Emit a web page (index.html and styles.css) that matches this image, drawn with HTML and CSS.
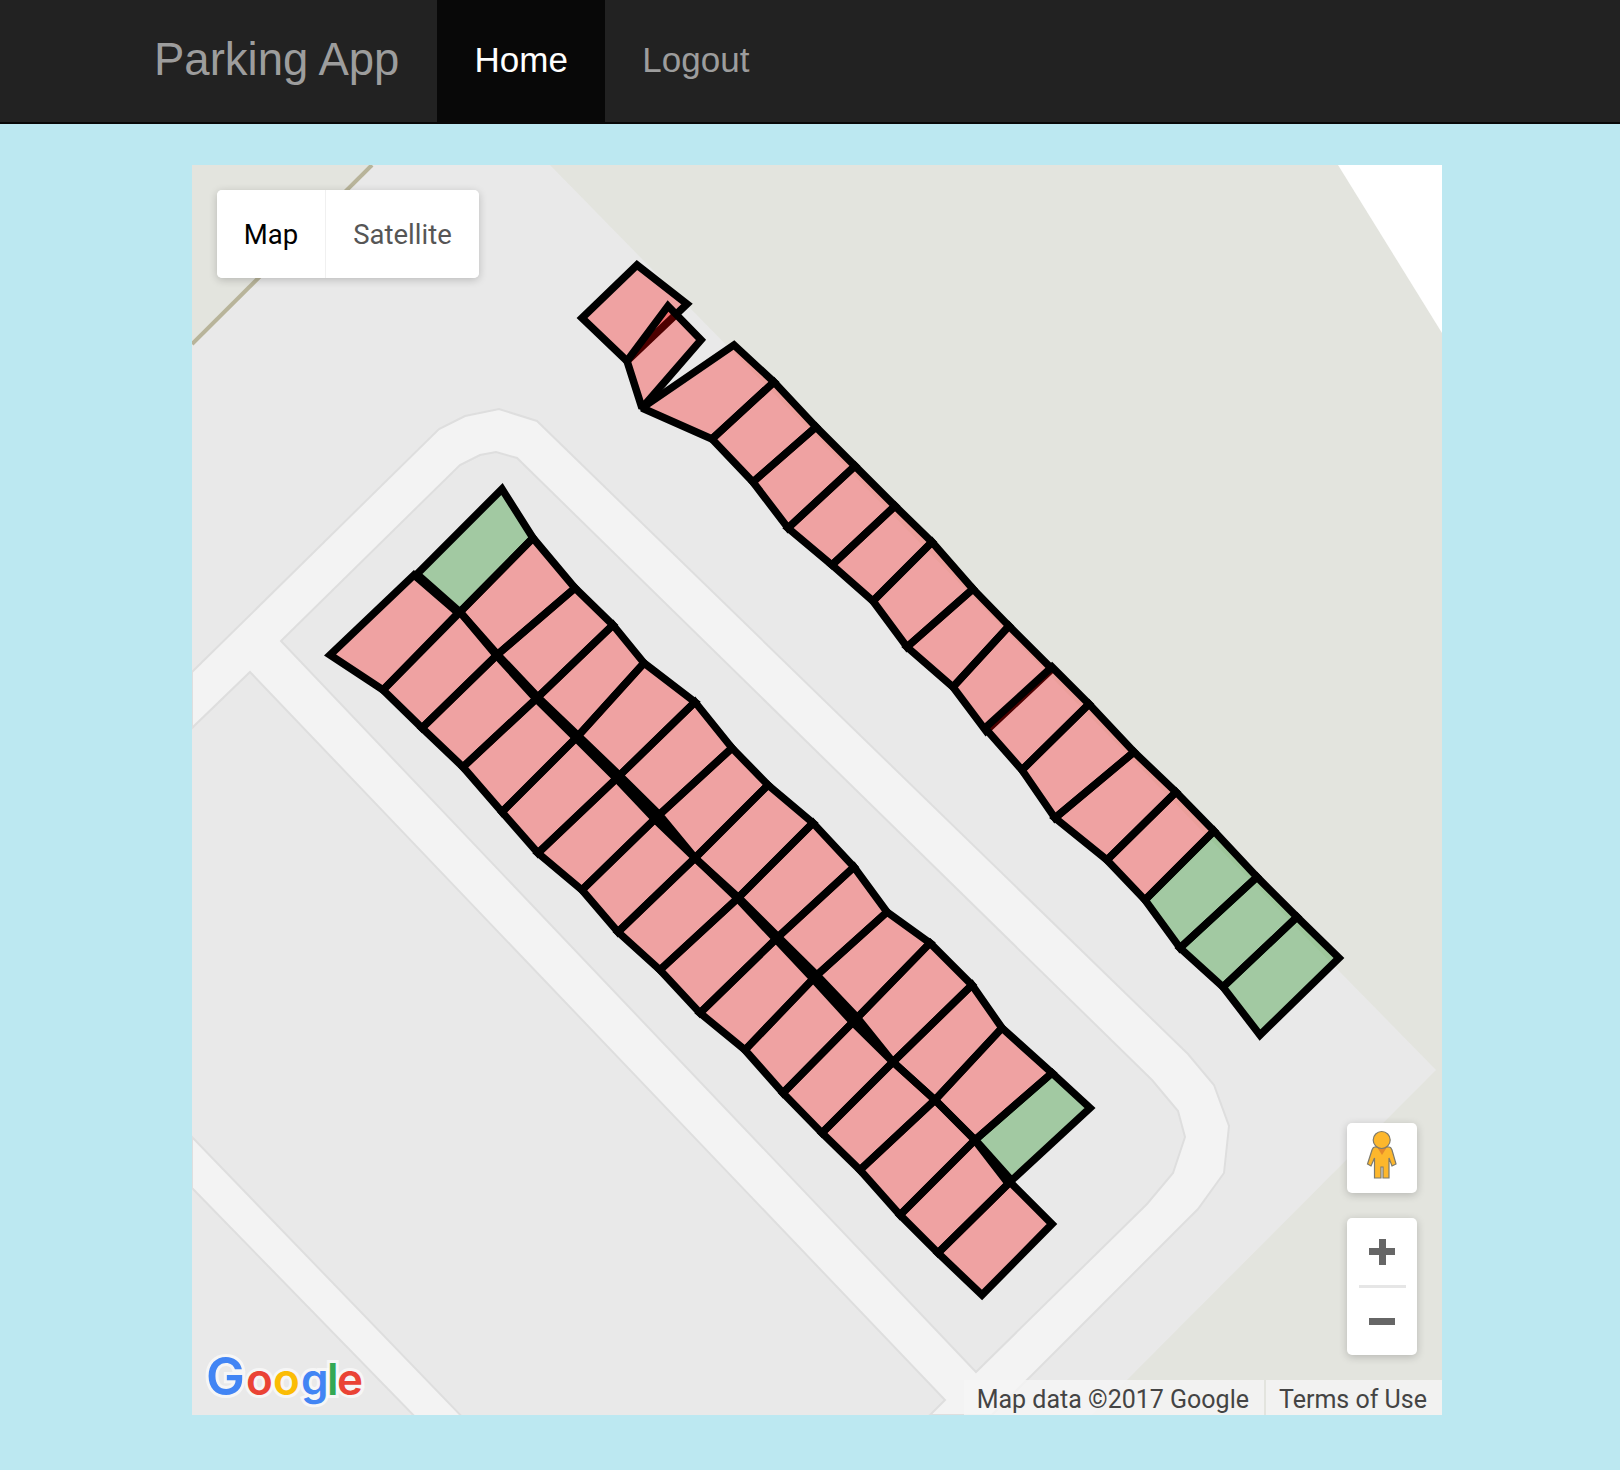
FILE: index.html
```html
<!DOCTYPE html>
<html>
    <head>
        <title>Parking App</title>
        <link rel="stylesheet" href="styles.css">
    </head>
    <body>
        <nav class="navbar">
            <a class="brand" href="#">Parking App</a>
            <ul class="nav_links">
                <li class="active"><a href="#">Home</a></li>
                <li><a href="#">Logout</a></li>
            </ul>
        </nav>
        <section class="map">
            <svg class="map_canvas" viewBox="192 165 1250 1250">
                <!-- ground -->
                <rect class="pavement" x="192" y="165" width="1250" height="1250" />
                <polygon class="land" points="550,165 1442,165 1442,1415 1092,1415 1436,1070" />
                <polygon class="land" points="192,165 372,165 192,344" />
                <line class="path" x1="372" y1="165" x2="192" y2="344" />
                <polygon class="blank" points="1338,165 1442,165 1442,333" />
                <!-- roads -->
                <polygon class="road" points="192,672 439,429 465,416 499,409 537,421 1188,1054 1214,1085 1229,1126 1224,1173 1198,1209 992,1415 930,1415 945,1400 250,672 192,728" />
                <polygon class="island" points="281,641 460,465 480,455 496,452 517,458 1152,1080 1178,1111 1185,1137 1173,1173 1147,1204 976,1372" />
                <polygon class="road" points="192,1137 470,1425 423,1425 192,1188" />

                <!-- right row -->
                <polygon class="taken" points="637,265 687,304 627,361 582,318" />
                <polygon class="taken" points="668,306 701,340 642,408 627,361" />
                <polygon class="taken" points="642,408 734,345 774,382 712,439" />
                <polygon class="taken" points="774,382 816,427 753,482 712,439" />
                <polygon class="taken" points="816,427 855,466 788,528 753,482" />
                <polygon class="taken" points="855,466 895,506 832,565 788,528" />
                <polygon class="taken" points="895,506 932,542 873,601 832,565" />
                <polygon class="taken" points="932,542 973,589 907,647 873,601" />
                <polygon class="taken" points="973,589 1009,626 953,687 907,647" />
                <polygon class="taken" points="1009,626 1052,669 986,731 953,687" />
                <polygon class="taken" points="1052,667 1089,704 1022,770 985,728" />
                <polygon class="taken" points="1089,704 1134,752 1055,818 1022,770" />
                <polygon class="taken" points="1134,752 1176,792 1107,860 1055,818" />
                <polygon class="taken" points="1176,792 1214,831 1145,900 1107,860" />
                <polygon class="free" points="1214,831 1257,877 1180,948 1145,900" />
                <polygon class="free" points="1257,877 1297,917 1223,987 1180,948" />
                <polygon class="free" points="1297,917 1339,958 1260,1035 1223,987" />

                <!-- left block, upper column -->
                <polygon class="free" points="502,489 533,538 460,612 417,574" />
                <polygon class="taken" points="533,538 575,588 497.5,654.5 460,612" />
                <polygon class="taken" points="575,588 613,625 537.9,697.1 497.5,654.5" />
                <polygon class="taken" points="613,625 644,663 578.2,735.8 537.9,697.1" />
                <polygon class="taken" points="644,663 695,702 619.6,775.4 578.2,735.8" />
                <polygon class="taken" points="695,702 732,748 659.3,814.7 619.6,775.4" />
                <polygon class="taken" points="732,748 768,785 695,858 659.3,814.7" />
                <polygon class="taken" points="768,785 813,823 738.5,897.5 695,858" />
                <polygon class="taken" points="813,823 854,867 778.2,936.8 738.5,897.5" />
                <polygon class="taken" points="854,867 887,912 816.9,975.1 778.2,936.8" />
                <polygon class="taken" points="887,912 930,943 857.3,1017.7 816.9,975.1" />
                <polygon class="taken" points="930,943 972,985 893,1062 857.3,1017.7" />
                <polygon class="taken" points="972,985 1002,1028 935,1100 893,1062" />
                <polygon class="taken" points="1002,1028 1052,1073 975.2,1139.8 935,1100" />
                <polygon class="free" points="1052,1073 1090,1108 1011.6,1180.4 975.2,1139.8" />

                <!-- left block, lower column -->
                <polygon class="taken" points="414,575 458,613 383,690 330,655" />
                <polygon class="taken" points="460,612 496.5,655.5 422,728 383,690" />
                <polygon class="taken" points="496.5,655.5 536.1,698.9 463,767 422,728" />
                <polygon class="taken" points="536.1,698.9 575.8,738.2 502,812 463,767" />
                <polygon class="taken" points="575.8,738.2 616.4,778.6 538,853 502,812" />
                <polygon class="taken" points="616.4,778.6 654.7,819.3 582,890 538,853" />
                <polygon class="taken" points="654.7,819.3 695,858 618,932 582,890" />
                <polygon class="taken" points="695,858 737.5,898.5 660,970 618,932" />
                <polygon class="taken" points="737.5,898.5 775.8,939.2 700,1013 660,970" />
                <polygon class="taken" points="775.8,939.2 813.1,978.9 745,1050 700,1013" />
                <polygon class="taken" points="813.1,978.9 852.7,1022.3 783,1093 745,1050" />
                <polygon class="taken" points="852.7,1022.3 893,1062 822,1133 783,1093" />
                <polygon class="taken" points="893,1062 935,1100 860,1170 822,1133" />
                <polygon class="taken" points="935,1100 974.8,1140.2 900,1215 860,1170" />
                <polygon class="taken" points="974.8,1140.2 1008.4,1183.6 938,1253 900,1215" />
                <polygon class="taken" points="1010,1182 1052,1224 982,1295 938,1253" />

                <!-- google logo -->
                <text class="logo">
                    <tspan class="logo_big logo_blue" x="206" y="1395">G</tspan>
                    <tspan class="logo_red" x="246" y="1395">o</tspan>
                    <tspan class="logo_yellow" x="273" y="1395">o</tspan>
                    <tspan class="logo_blue" x="301" y="1395">g</tspan>
                    <tspan class="logo_green" x="327" y="1395">l</tspan>
                    <tspan class="logo_red" x="337" y="1395">e</tspan>
                </text>
            </svg>

            <div class="map_type">
                <button class="map_type_btn selected">Map</button>
                <button class="map_type_btn">Satellite</button>
            </div>

            <div class="pegman">
                <svg viewBox="0 0 70 70" width="70" height="70">
                    <path class="pegman_body" d="M28,24 L42,24 Q44,24 45,27 L49,41 L45,43 L42,35 L42,55 L36,55 L36,44 L34,44 L34,55 L27.5,55 L27.5,35 L24,43 L20.5,41 L25,27 Q26,24 28,24 Z" />
                    <path class="pegman_collar" d="M30,24 L40,24 L35,32 Z" />
                    <circle class="pegman_body" cx="34.7" cy="17" r="8.5" />
                </svg>
            </div>

            <div class="zoom_ctrl">
                <button class="zoom_btn"><span class="plus"></span></button>
                <div class="zoom_line"></div>
                <button class="zoom_btn"><span class="minus"></span></button>
            </div>

            <div class="attribution">
                <span>Map data ©2017 Google</span>
                <span>Terms of Use</span>
            </div>
        </section>
    </body>
</html>
```

FILE: styles.css
```css
*{
    box-sizing: border-box;
}
html, body{
    margin: 0;
    padding: 0;
    background: #bce8f1;
}
a{
    text-decoration: none;
}

/* navbar */
.navbar{
    display: flex;
    height: 124px;
    padding-left: 118px;
    background: #222;
    border-bottom: 2px solid #080808;
    font-family: "Liberation Sans", sans-serif;
}
.brand{
    padding: 0 38px 0 36px;
    font-size: 45.5px;
    line-height: 120px;
    color: #9d9d9d;
}
.nav_links{
    display: flex;
    margin: 0;
    padding: 0;
    list-style: none;
}
.nav_links a{
    display: block;
    height: 122px;
    padding: 0 37.2px;
    font-size: 35px;
    line-height: 120px;
    color: #9d9d9d;
}
.nav_links .active a{
    background: #080808;
    color: #fff;
}

/* map */
.map{
    position: relative;
    width: 1250px;
    height: 1250px;
    margin: 41px 0 55px 192px;
    overflow: hidden;
}
.map_canvas{
    display: block;
    width: 1250px;
    height: 1250px;
}
.pavement{
    fill: #e9e9e9;
}
.land{
    fill: #e3e4de;
}
.blank{
    fill: #fff;
}
.path{
    stroke: #b8b49a;
    stroke-width: 4;
}
.road{
    fill: #f3f3f3;
    stroke: #dedede;
    stroke-width: 2;
}
.island{
    fill: #e9e9e9;
    stroke: #dedede;
    stroke-width: 2;
}
.taken, .free{
    stroke: #000;
    stroke-width: 7.5;
    stroke-linejoin: miter;
    stroke-miterlimit: 2;
    fill-opacity: 0.3;
}
.taken{
    fill: #f00;
}
.free{
    fill: #008000;
}

/* logo */
.logo{
    font-family: Inter, sans-serif;
    font-size: 44px;
    font-weight: 600;
    stroke: #fff;
    stroke-opacity: 0.6;
    stroke-width: 6px;
    paint-order: stroke;
}
.logo_big{
    font-size: 52px;
}
.logo_blue{
    fill: #4285f4;
}
.logo_red{
    fill: #ea4335;
}
.logo_yellow{
    fill: #fbbc05;
}
.logo_green{
    fill: #34a853;
}

/* map controls */
.map_type{
    position: absolute;
    top: 25px;
    left: 25px;
    display: flex;
    gap: 1px;
    height: 88px;
    border-radius: 5px;
    box-shadow: 0 2px 8px rgba(0,0,0,0.2);
    background: #f0f0f0;
    overflow: hidden;
}
.map_type_btn{
    padding: 0;
    border: 0;
    background: #fff;
    font-family: Roboto, sans-serif;
    font-size: 27.5px;
    color: #565656;
    width: 153px;
}
.map_type_btn.selected{
    width: 108px;
    color: #000;
}
.pegman{
    position: absolute;
    top: 958px;
    left: 1155px;
    width: 70px;
    height: 70px;
    border-radius: 5px;
    background: #fff;
    box-shadow: 0 2px 8px rgba(0,0,0,0.2);
}
.pegman svg{
    display: block;
}
.pegman_body{
    fill: #fdb72c;
    stroke: #7d7a6d;
    stroke-width: 1.2;
}
.pegman_collar{
    fill: #e5892b;
}
.zoom_ctrl{
    position: absolute;
    top: 1053px;
    left: 1155px;
    width: 70px;
    height: 137px;
    display: flex;
    flex-direction: column;
    align-items: center;
    border-radius: 5px;
    background: #fff;
    box-shadow: 0 2px 8px rgba(0,0,0,0.2);
}
.zoom_btn{
    flex: 1;
    width: 100%;
    padding: 0;
    border: 0;
    background: none;
    display: flex;
    align-items: center;
    justify-content: center;
}
.zoom_line{
    width: 47px;
    height: 3px;
    background: #e6e6e6;
}
.plus, .minus{
    position: relative;
    display: block;
    width: 26px;
    height: 7px;
    background: #666;
}
.plus::after{
    content: "";
    position: absolute;
    top: -9.5px;
    left: 9.5px;
    width: 7px;
    height: 26px;
    background: #666;
}
.attribution{
    position: absolute;
    right: 0;
    bottom: 0;
    display: flex;
    gap: 2px;
    height: 35px;
    font-family: Roboto, sans-serif;
    font-size: 25px;
    line-height: 39px;
    color: #444;
}
.attribution span{
    padding: 0 15px 0 13px;
    background: rgba(245,245,245,0.8);
}
```
